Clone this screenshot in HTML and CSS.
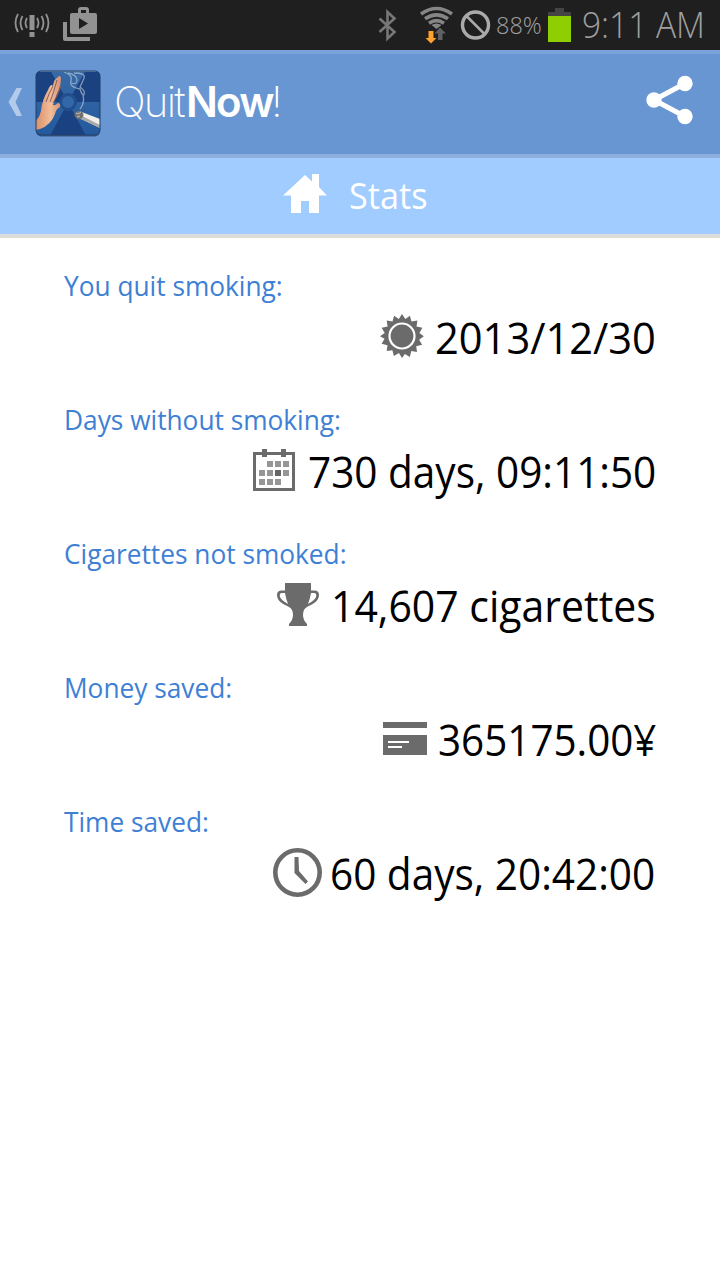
FILE: index.html
```html
<!DOCTYPE html>
<html lang="en">
<head>
    <meta charset="UTF-8">
    <meta name="viewport" content="width=device-width, initial-scale=1.0">
    <title>QuitNow! Stats</title>
    <link rel="stylesheet" href="styles.css">
</head>
<body>

<div class="status-bar">
    <svg class="status-left" width="110" height="50" viewBox="0 0 110 50">
        <g fill="none" stroke="#929292" stroke-width="1.8">
            <path d="M18 14q-5 9 0 18M22.500 16q-4 7 0 14M27 18q-3 5 0 10M46 14q5 9 0 18M41.500 16q4 7 0 14M37 18q3 5 0 10"/>
        </g>
        <path d="M29.500 15h5v15h-5zM29.500 32h5v5h-5z" fill="#929292"/>
        <path d="M63 22h4v15h23v4H65q-2 0-2-2zM72 13h6v-3q0-3 3-3h5q3 0 3 3v3h6q2 0 2 2v17q0 2-2 2H72q-2 0-2-2V15q0-2 2-2zM81 10v3h5v-3zM79 18v11l9-5.500z" fill="#929292" fill-rule="evenodd"/>
    </svg>
    <svg class="status-signals" width="120" height="50" viewBox="374 0 120 50">
        <path d="M379.500 18.500l15 13.500-7 6.500V12l7 6.500-15 13.500" fill="none" stroke="#777" stroke-width="2.600"/>
        <g fill="none" stroke="#858585" stroke-width="3.600">
            <path d="M421 14q15.500-11 31 0M425 18.800q11.500-8 23 0M429 23.200q7.500-5 15 0"/>
        </g>
        <path d="M431.500 25q5-3 10 0l-5 4z" fill="#858585"/>
        <path d="M428.500 31h5v7h3l-5.500 5.500-5.500-5.500h3z" fill="#ffa22e"/>
        <path d="M440 27.500l6 6h-3.500v6.500h-4.500v-6.500h-3.500z" fill="#606060"/>
        <circle cx="475.500" cy="25" r="13" fill="none" stroke="#aaa" stroke-width="3.400"/>
        <path d="M466.500 16l18 18" stroke="#aaa" stroke-width="2.500"/>
    </svg>
    <span class="percent">88%</span>
    <span class="battery"></span>
    <span class="clock">9:11 AM</span>
</div>

<div class="action-bar">
    <svg class="back" width="14" height="28" viewBox="0 0 14 28">
        <path d="M8.500 0H14L7.500 14 14 28H8.500L.5 14z" fill="#b3cbeb"/>
    </svg>
    <svg class="logo" width="66" height="68" viewBox="0 0 66 68">
        <defs>
            <linearGradient id="blue" x1="0" y1="0" x2="0" y2="1">
                <stop offset="0" stop-color="#386aa7"/>
                <stop offset="1" stop-color="#23599c"/>
            </linearGradient>
            <linearGradient id="skin" x1="0" y1="0" x2="1" y2="0">
                <stop offset="0" stop-color="#d98c66"/>
                <stop offset=".6" stop-color="#f1bd98"/>
                <stop offset="1" stop-color="#d59172"/>
            </linearGradient>
            <clipPath id="tile"><rect x="1" y="1" width="64" height="64" rx="5"/></clipPath>
        </defs>
        <rect x="1" y="2.500" width="64" height="64" rx="5" fill="#334c70" opacity=".8"/>
        <g clip-path="url(#tile)">
            <rect width="66" height="68" fill="url(#blue)"/>
            <path d="M33 32L15 0H0v32zM33 32L51 0h15v32zM33 32L15 66h36z" fill="#1b4280"/>
            <circle cx="33" cy="32" r="9" fill="#214e8d"/>
            <circle cx="33" cy="32" r="6" fill="#3268a9"/>
            <path d="M0 60V52Q5 47 6 41Q7 30 13 20Q16 13 18 16Q19 9 22 8Q25 4 26 8Q26 16 22 24L18 35Q20 36 23 33Q26 33 25 37Q21 39 20 44Q16 55 5 59z" fill="url(#skin)"/>
            <path d="M11 32q3-9 7-16M15 32q4-10 7-22M18 33q5-8 8-17" fill="none" stroke="#865f5d" stroke-width="1"/>
            <path d="M29 2Q38 5 36 11T45 19Q46 23 48 25Q50 33 45 39M33 3q9 2 9 7t-5 3M39 3q12 0 10 5t-4 9q7 5 3 9" fill="none" stroke="#c6d3df" stroke-width="1.300" opacity=".6"/>
            <path d="M44 41l21 8v9L44 48z" fill="#f1efe9"/>
            <path d="M44 48l21 10v-3L45 45z" fill="#aaa9a8"/>
            <ellipse cx="44" cy="45" rx="4.500" ry="4" fill="#72716f"/>
            <path d="M41 43l2 1 3-2M42 47l3-1" fill="none" stroke="#c2c2bd" stroke-width="1"/>
            <path d="M1 1.500h64" stroke="#7396c1" stroke-width="1"/>
        </g>
        <rect x="1" y="1" width="64" height="64" rx="5" fill="none" stroke="#203f68"/>
    </svg>
    <div class="brand"><span class="quit">Quit</span><span class="now">Now</span><span class="bang">!</span></div>
    <svg class="share" width="48" height="52" viewBox="0 0 48 52">
        <path d="M39 9.500L8 26 39 42.500" fill="none" stroke="#fff" stroke-width="5"/>
        <circle cx="39" cy="9.500" r="7.700" fill="#fff"/>
        <circle cx="8" cy="26" r="7.700" fill="#fff"/>
        <circle cx="39" cy="42.500" r="7.700" fill="#fff"/>
    </svg>
</div>

<div class="tab">
    <svg class="home" width="44" height="40" viewBox="0 0 44 40">
        <path d="M22 1l7 6.500V0h7v13l8 8.500h-8V39H26V27h-8v12H8V21.500H0z" fill="#fff"/>
    </svg>
    <h1>Stats</h1>
</div>

<main class="stats">
    <section class="stat">
        <h2 class="label">You quit smoking:</h2>
        <div class="row">
            <svg width="44" height="44" viewBox="0 0 44 44">
                <path d="M22 0l3.300 5L29.900 1.700l1.600 5.900 5.900-1.200-.9 6 5.900 1.300-3 5.200 4.400 3.300-4.700 3.500 3 5-5.900 1.500.8 5.800-5.700-.9-1.500 5.900-4.900-3.100L22 44l-3.100-5-5 3.100-1.500-5.900-5.700.9.800-5.800-5.900-1.500 3-5L0 22.200l4.700-3.300-3-5.200 5.900-1.300-.9-6 5.800 1.200 1.600-5.900 4.700 3.300z" fill="#6b6b6b"/>
                <circle cx="22" cy="22" r="12.500" fill="#6b6b6b" stroke="#fff" stroke-width="2.200"/>
            </svg>
            <span class="value value-date">2013/12/30</span>
        </div>
    </section>
    <section class="stat">
        <h2 class="label">Days without smoking:</h2>
        <div class="row">
            <svg width="42" height="42" viewBox="0 0 42 42">
                <path d="M0 3h9V0h5v3h14V0h5v3h9v39H0zM3 6v33h36V6h-6v2h-5V6H14v2H9V6z" fill="#6b6b6b" fill-rule="evenodd"/>
                <path d="M14 12h6v6h-6zM22 12h6v6h-6zM30 12h6v6h-6zM6 21h6v6H6zM14 21h6v6h-6zM30 21h6v6h-6zM6 30h6v6H6zM14 30h6v6h-6zM22 30h6v6h-6z" fill="#969696"/>
                <path d="M22 21h6v6h-6z" fill="#666"/>
            </svg>
            <span class="value value-days">730 days, 09:11:50</span>
        </div>
    </section>
    <section class="stat">
        <h2 class="label">Cigarettes not smoked:</h2>
        <div class="row">
            <svg width="42" height="43" viewBox="0 0 42 43">
                <path d="M8 0h26v7.500h3.500Q42 7.500 42 12c0 6-6 9-12 12q-4 2-4 8 0 5 4 9v2H12v-2q4-4 4-9 0-6-4-8C6 21 0 18 0 12q0-4.500 4.500-4.500H8zM8 10H5q-3 0-2 4 1 3 8 7-2-5-3-11zM34 10q-1 6-3 11 7-4 8-7 1-4-2-4z" fill="#6b6b6b" fill-rule="evenodd"/>
            </svg>
            <span class="value value-cigs">14,607 cigarettes</span>
        </div>
    </section>
    <section class="stat">
        <h2 class="label">Money saved:</h2>
        <div class="row">
            <svg width="44" height="33" viewBox="0 0 44 33">
                <path d="M0 0h44v6H0zM0 13h44v20H0z" fill="#6b6b6b"/>
                <path d="M5 19h21v2H5zM5 24h14v2H5z" fill="#fff"/>
            </svg>
            <span class="value value-money">365175.00¥</span>
        </div>
    </section>
    <section class="stat">
        <h2 class="label">Time saved:</h2>
        <div class="row">
            <svg width="49" height="49" viewBox="0 0 49 49">
                <circle cx="24.500" cy="24.500" r="22.200" fill="none" stroke="#6b6b6b" stroke-width="4.600"/>
                <path d="M21.500 9h4l.5 14L35 33.500l-2.500 2.500L21.500 25z" fill="#6b6b6b"/>
            </svg>
            <span class="value value-time">60 days, 20:42:00</span>
        </div>
    </section>
</main>

</body>
</html>
```
FILE: styles.css
```css
* {
    box-sizing: border-box;
}

body {
    width: 720px;
    height: 1280px;
    margin: 0;
    background-color: #fff;
    font-family: "Open Sans", sans-serif;
}

svg {
    display: block;
    flex: none;
}

.status-bar {
    display: flex;
    align-items: center;
    height: 50px;
    background-color: #1f1f1f;
    color: #a0a0a0;
    white-space: nowrap;
    overflow: hidden;
}

.status-signals {
    margin-left: 264px;
}

.percent {
    width: 54px;
    padding-left: 2px;
    font-size: 23.5px;
    font-weight: 350;
}

.battery {
    width: 23px;
    height: 34px;
    background: linear-gradient(#444, #444) 7px 0 / 9px 4px no-repeat,
        linear-gradient(#444 4px, #8fce00 4px) 0 4px / 23px 30px no-repeat;
}

.clock {
    margin-left: 11px;
    padding-bottom: 2px;
    font-size: 36px;
    font-weight: 350;
    transform: scaleX(0.93);
    transform-origin: left;
}

.action-bar {
    display: flex;
    align-items: center;
    height: 108px;
    padding: 0 26px 4px 8px;
    background-color: #6896d3;
    border-top: 4px solid #7ba3db;
    border-bottom: 4px solid #8cafdd;
}

.logo {
    margin-left: 13px;
    margin-top: 3px;
}

.brand {
    display: flex;
    align-items: baseline;
    margin-left: 13px;
    color: #fff;
    font-family: Inter, sans-serif;
    font-size: 42px;
    line-height: 60px;
}

.quit {
    width: 72px;
    font-weight: 200;
    letter-spacing: -1.8px;
}

.now {
    width: 85px;
    font-weight: 600;
    letter-spacing: -1.8px;
}

.bang {
    font-weight: 200;
}

.share {
    margin-left: auto;
    margin-bottom: 4px;
}

.tab {
    display: flex;
    align-items: center;
    height: 80px;
    padding: 0 0 4px 283px;
    background-color: #a0ccff;
    border-bottom: 4px solid #dcdcdc;
}

h1 {
    margin: 2px 0 0 22px;
    color: #fff;
    font-size: 36px;
    font-weight: 400;
    transform: scaleX(0.95);
    transform-origin: left;
}

.stats {
    padding: 0 64px;
}

.stat {
    height: 134px;
    padding-top: 27px;
}

.label {
    width: max-content;
    margin: 0;
    color: #3e80d4;
    font-size: 28px;
    font-weight: 400;
    line-height: 40px;
    white-space: nowrap;
    transform: scaleX(0.938);
    transform-origin: left;
}

.row {
    display: flex;
    align-items: center;
    justify-content: flex-end;
    height: 62px;
}

/* condensed figures, squeezed from their left edge */
.value {
    color: #000;
    font-size: 44px;
    line-height: 60px;
    padding-top: 2px;
    white-space: nowrap;
    transform: scaleX(0.921);
    transform-origin: left;
}

.value-date {
    width: 221px;
    margin-left: 11px;
    transform: scaleX(0.946);
}

.value-days {
    width: 348px;
    margin-left: 13px;
}

.value-cigs {
    width: 325px;
    margin-left: 12px;
    transform: scaleX(0.931);
}

.value-money {
    width: 218px;
    margin-left: 11px;
    transform: scaleX(0.918);
}

.value-time {
    width: 326px;
    margin-left: 8px;
}
```
